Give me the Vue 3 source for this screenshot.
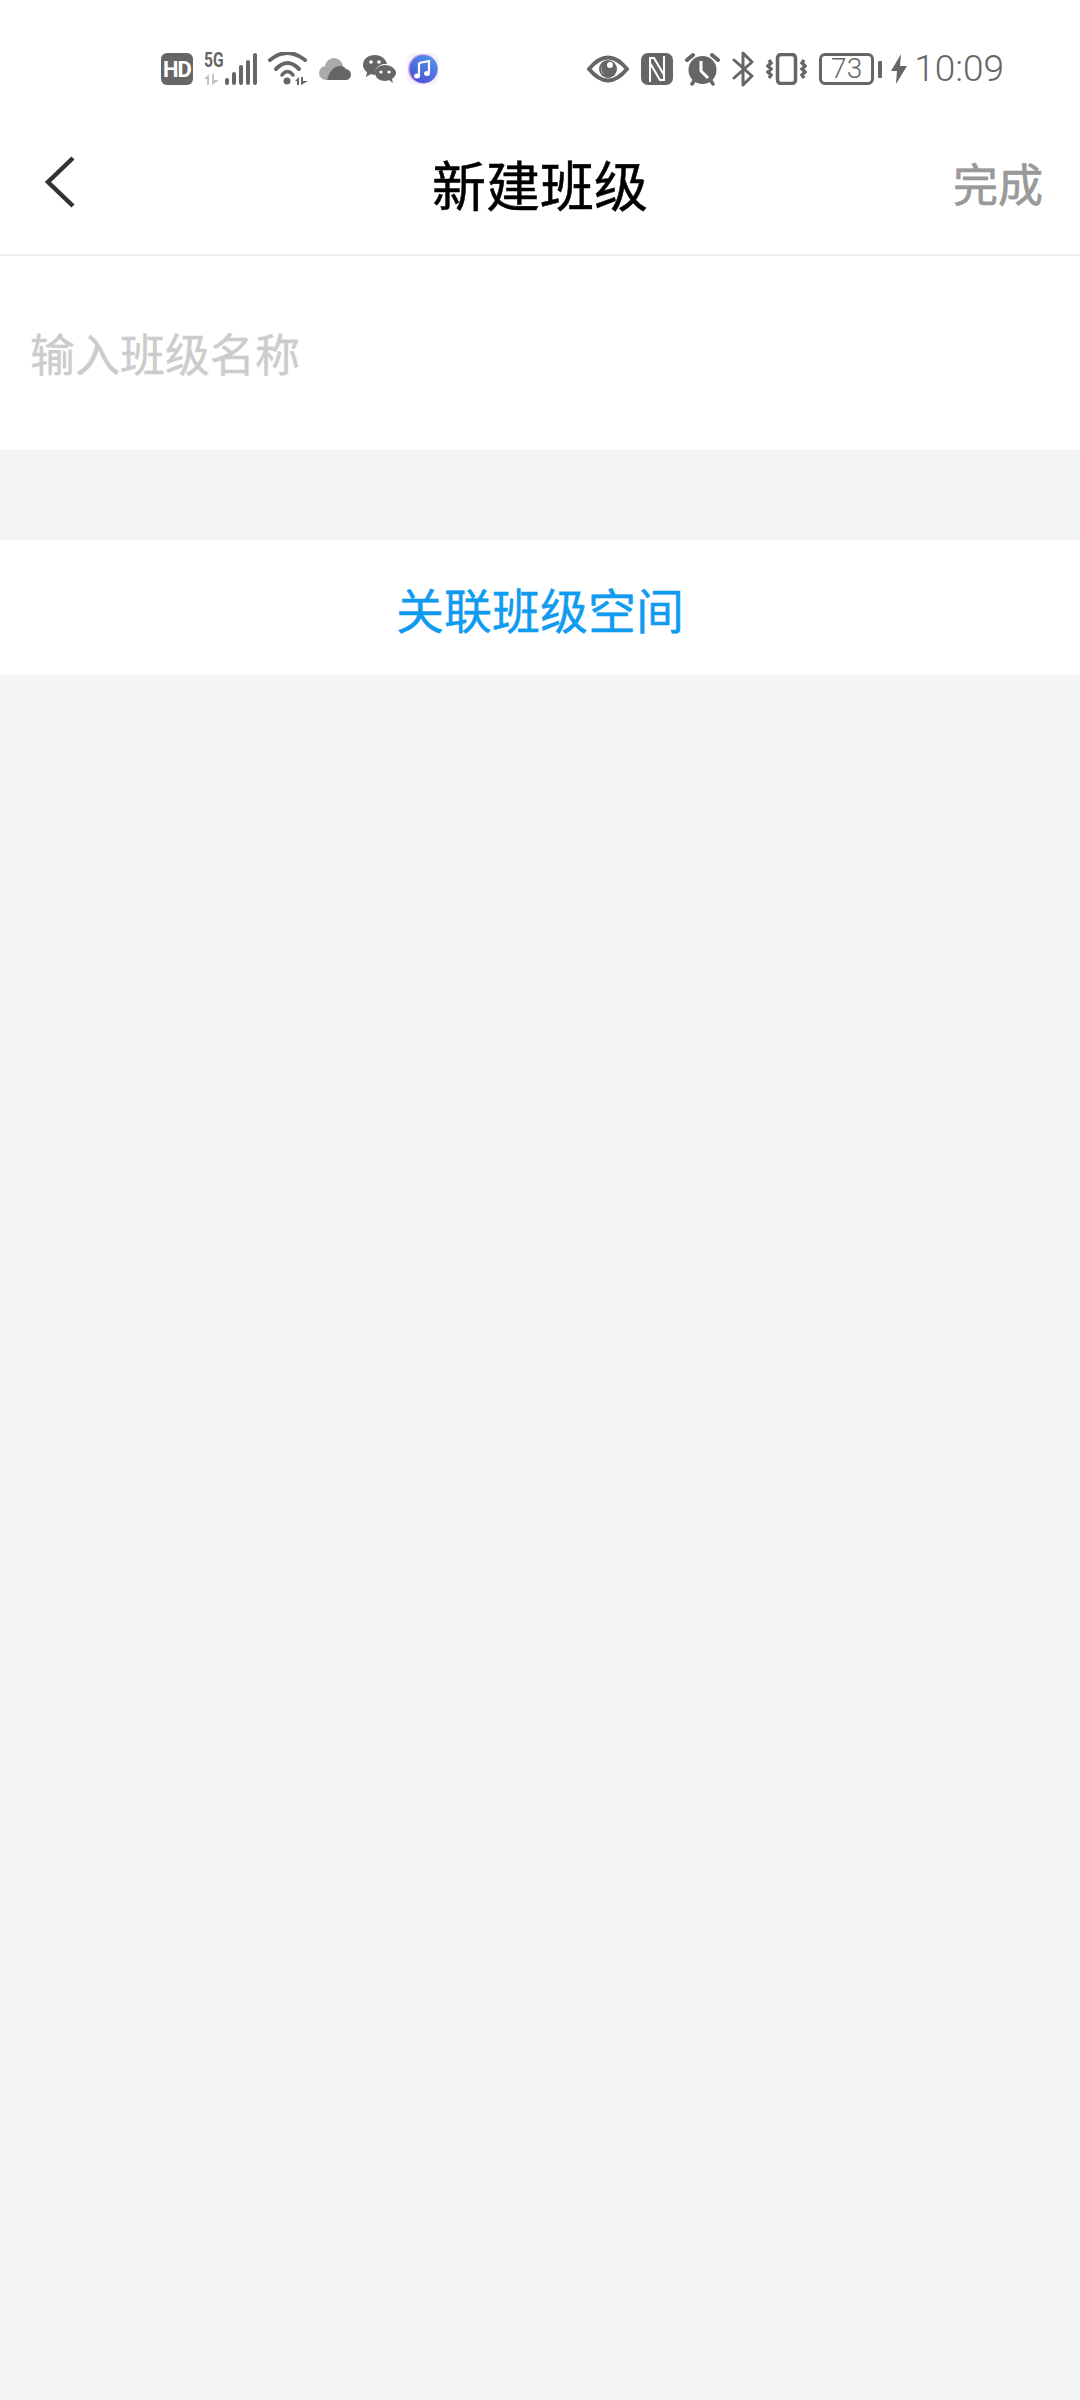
<script setup>
const title = '新建班级'
</script>

<template>
  <div class="page">
    <div class="status-bar">
      <div class="status-left">
        <svg class="ic" width="32" height="32" viewBox="0 0 32 32">
          <rect width="32" height="32" rx="6" fill="#666" />
          <text x="16" y="24" text-anchor="middle" class="hd">HD</text>
        </svg>
        <div class="signal">
          <div class="net">
            <span class="five-g">5G</span>
            <svg width="15" height="11" viewBox="0 0 15 11">
              <path d="M0 5 L5 0 V11 H3 V5 Z M8 0 H10 V6 H15 L8 11 Z" fill="#c4c4c4" />
            </svg>
          </div>
          <div class="bars">
            <i style="height: 7px"></i>
            <i style="height: 13px"></i>
            <i style="height: 20px"></i>
            <i style="height: 25px"></i>
            <i style="height: 32px"></i>
          </div>
        </div>
        <svg class="ic" width="40" height="34" viewBox="0 0 40 34">
          <path d="M2 8 Q19 -6 37 8" fill="none" stroke="#666" stroke-width="4" stroke-linecap="round" />
          <path d="M8 17 Q19.500 5 31 17" fill="none" stroke="#666" stroke-width="4" stroke-linecap="round" />
          <path d="M14 23 Q19.500 16 25 23" fill="none" stroke="#666" stroke-width="3.500" stroke-linecap="round" />
          <circle cx="19" cy="29" r="3.500" fill="#666" />
          <path d="M27 29 L31 25 V33 H29 V29 Z M33 25 H35 V29 H40 L33 33 Z" fill="#666" />
        </svg>
        <svg class="ic" width="32" height="22" viewBox="0 0 32 22">
          <circle cx="7" cy="15" r="7" fill="#aaa" />
          <circle cx="15" cy="9" r="9" fill="#aaa" />
          <path d="M8 22 Q12 8 21 8 Q25 8 27 11 Q32 12 32 17 Q31 22 27 22 Z" fill="#666" />
        </svg>
        <svg class="ic" width="34" height="30" viewBox="0 0 34 30">
          <path d="M13 1 C6 1 1 5 1 11 C1 14 3 17 5 18 L4 23 L9 20 Q11 21 13 21 Q12 13 21 10 L25 10 C24 5 19 1 13 1 Z" fill="#666" />
          <circle cx="9" cy="8" r="1.800" fill="#fff" />
          <circle cx="17" cy="8" r="1.800" fill="#fff" />
          <path d="M23 11 C17 11 13 15 13 19 C13 24 18 27 23 27 Q25 27 27 26 L31 29 L30 25 Q34 22 34 19 C34 15 29 11 23 11 Z" fill="#666" />
          <circle cx="19" cy="18" r="1.600" fill="#fff" />
          <circle cx="27" cy="18" r="1.600" fill="#fff" />
        </svg>
        <svg class="ic" width="32" height="32" viewBox="0 0 32 32">
          <defs>
            <linearGradient id="music" x1="0.8" y1="0" x2="0.2" y2="1">
              <stop offset="0" stop-color="#4f94ec" />
              <stop offset="1" stop-color="#4b50d6" />
            </linearGradient>
          </defs>
          <rect width="32" height="32" rx="7" fill="#f6f4fa" />
          <circle cx="16" cy="16" r="15" fill="#e3a6ee" />
          <circle cx="16.500" cy="16" r="14" fill="url(#music)" />
          <path d="M12 10 L22 8 V20 M12 10 V23" fill="none" stroke="#fff" stroke-width="2.200" />
          <ellipse cx="10" cy="23" rx="3" ry="2.500" fill="#fff" />
          <ellipse cx="20" cy="20.500" rx="3" ry="2.500" fill="#fff" />
        </svg>
      </div>

      <div class="status-right">
        <svg class="ic" width="42" height="28" viewBox="0 0 42 28">
          <path d="M2 14 Q21 -9 40 14 Q21 37 2 14 Z" fill="none" stroke="#666" stroke-width="4" stroke-linejoin="round" />
          <circle cx="21" cy="14" r="9" fill="#666" />
          <path d="M15 10 A7 7 0 0 0 18 20 A8 8 0 0 1 15 10 Z" fill="#fff" />
          <circle cx="23" cy="10" r="3" fill="#fff" />
        </svg>
        <svg class="ic" width="32" height="32" viewBox="0 0 32 32">
          <rect width="32" height="32" rx="7" fill="#666" />
          <path d="M9 29 V5 H13 L23 22 M23 3 V27 H19 L9 10" fill="none" stroke="#fff" stroke-width="2" />
        </svg>
        <svg class="ic" width="35" height="34" viewBox="0 0 35 34">
          <circle cx="17.500" cy="18" r="14" fill="#666" />
          <path d="M16 9 V19 L23 26" fill="none" stroke="#fff" stroke-width="3" />
          <path d="M2 8 L8 3 M33 8 L27 3" stroke="#666" stroke-width="4" stroke-linecap="round" />
          <path d="M7 32 L9 29 M28 32 L26 29" stroke="#666" stroke-width="3.500" stroke-linecap="round" />
        </svg>
        <svg class="ic" width="22" height="36" viewBox="0 0 22 36">
          <path d="M2 9 L20 25 L11 34 V2 L20 11 L2 27" fill="none" stroke="#666" stroke-width="3" stroke-linejoin="round" stroke-linecap="round" />
        </svg>
        <svg class="ic" width="41" height="32" viewBox="0 0 41 32">
          <rect x="11.500" y="1.500" width="18" height="29" rx="3.500" fill="none" stroke="#666" stroke-width="3.500" />
          <path d="M3 7 L5 10 L2 13 L5 16 L2 19 L5 22 L3 25 M38 7 L36 10 L39 13 L36 16 L39 19 L36 22 L38 25" fill="none" stroke="#666" stroke-width="3.400" />
        </svg>
        <div class="battery">
          <div class="battery-body">73</div>
          <div class="battery-nub"></div>
        </div>
        <svg class="ic bolt" width="16" height="30" viewBox="0 0 16 30">
          <path d="M10 0 L0 17 H6 L5 30 L16 12 H9 Z" fill="#666" />
        </svg>
        <span class="time">10:09</span>
      </div>
    </div>

    <header class="nav">
      <button class="back" aria-label="back">
        <svg width="30" height="52" viewBox="0 0 30 52">
          <path d="M28 2 L3 26 L28 50" fill="none" stroke="#333" stroke-width="4.500" />
        </svg>
      </button>
      <h1 class="title">{{ title }}</h1>
      <span class="done">完成</span>
    </header>

    <div class="name-row">
      <span class="placeholder">输入班级名称</span>
    </div>

    <div class="link-row">关联班级空间</div>
  </div>
</template>

<style>
html,
body {
  margin: 0;
  background: #f4f5f7;
}
</style>

<style scoped>
.page {
  min-height: 2400px;
  background: #f4f5f7;
  font-family: "Noto Sans CJK SC", "Noto Sans", sans-serif;
}

.status-bar {
  height: 138px;
  padding: 0 76px 0 161px;
  box-sizing: border-box;
  background: #fff;
  display: flex;
  align-items: center;
  justify-content: space-between;
}

.status-left,
.status-right {
  display: flex;
  align-items: center;
}

.status-left {
  gap: 11px;
}

.status-right {
  gap: 12px;
}

.ic {
  display: block;
  flex: none;
}

.hd {
  font-family: "Roboto", sans-serif;
  font-size: 22px;
  font-weight: 700;
  fill: #fff;
  letter-spacing: -1px;
}

.signal {
  display: flex;
  align-items: flex-end;
  justify-content: space-between;
  width: 53px;
  height: 32px;
}

.net {
  display: flex;
  flex-direction: column;
  justify-content: space-between;
  width: 17px;
  height: 32px;
}

.five-g {
  font-family: "Roboto", sans-serif;
  font-size: 20px;
  font-weight: 700;
  line-height: 14px;
  color: #666;
  transform: scaleX(0.78);
  transform-origin: left;
}

.bars {
  display: flex;
  align-items: flex-end;
  gap: 3px;
}

.bars i {
  display: block;
  width: 4px;
  background: #666;
  border-radius: 2px;
}

.battery {
  display: flex;
  align-items: center;
  gap: 4px;
}

.battery-body {
  width: 55px;
  height: 32px;
  box-sizing: border-box;
  border: 3px solid #666;
  border-radius: 6px;
  color: #666;
  font-family: "Roboto", sans-serif;
  font-size: 28px;
  font-weight: 300;
  line-height: 26px;
  text-align: center;
}

.battery-nub {
  width: 4px;
  height: 17px;
  background: #666;
  border-radius: 1px;
}

.bolt {
  margin: 0 -5px 0 -3px;
}

.time {
  font-family: "Roboto", sans-serif;
  font-size: 37px;
  font-weight: 300;
  color: #666;
  line-height: 40px;
}

.nav {
  height: 118px;
  box-sizing: border-box;
  padding-right: 37px;
  background: #fff;
  border-bottom: 2px solid #eeeeee;
  position: relative;
  display: flex;
  align-items: center;
  justify-content: flex-end;
}

.back {
  position: absolute;
  left: 45px;
  top: 18px;
  padding: 0;
  border: none;
  background: none;
  display: flex;
}

.title {
  position: absolute;
  left: 0;
  right: 0;
  top: 15px;
  margin: 0;
  text-align: center;
  font-size: 54px;
  font-weight: 400;
  -webkit-text-stroke: 0.5px #000;
  line-height: 62px;
  color: #000;
}

.done {
  font-size: 45px;
  font-weight: 400;
  -webkit-text-stroke: 0.7px #999;
  line-height: 58px;
  margin-top: -27px;
  color: #999;
}

.name-row {
  height: 194px;
  box-sizing: border-box;
  padding: 0 30px;
  background: #fff;
  display: flex;
  align-items: center;
}

.placeholder {
  font-size: 45px;
  font-weight: 400;
  -webkit-text-stroke: 0.4px #ccc;
  line-height: 60px;
  color: #ccc;
}

.link-row {
  margin-top: 90px;
  height: 135px;
  background: #fff;
  display: flex;
  align-items: center;
  justify-content: center;
  font-size: 48px;
  font-weight: 400;
  -webkit-text-stroke: 0.4px #0f9bf0;
  color: #0f9bf0;
}
</style>
